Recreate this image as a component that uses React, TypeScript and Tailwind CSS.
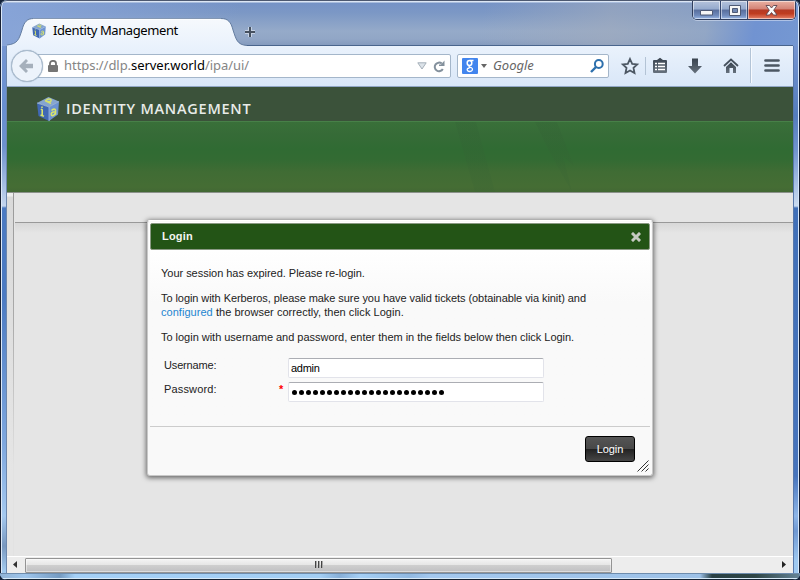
import React from "react";

const sans = "font-['Liberation_Sans',Arial,sans-serif]";
const noto = "font-['Noto_Sans','Open_Sans',sans-serif]";

function Cube({ className }: { className: string }) {
  return (
    <svg viewBox="0 0 24 26" className={className}>
      <path d="M12.500 1 23 5.500 13 11 1 7Z" fill="#86a5cf" />
      <path d="M1 7 13 11V25L2.500 20Z" fill="#4068b4" />
      <path d="M23 5.500 13 11V25L22 18.500Z" fill="#6c93d2" />
      <path d="M1 7 13 11 23 5.500M13 11V25" fill="none" stroke="#a9c2e2" strokeWidth=".7" />
      <path d="M9 4.500 15 7.500M10.500 4.200C11 2.600 15 2.400 15.200 4.200S12.500 6 11.500 5.400" fill="none" stroke="#d5e16a" strokeWidth="1.500" />
      <path d="M6.200 13.500V19.500M4.800 13.200 6.500 13.800M4.500 18.900 8 20.300M6 10.600V12" fill="none" stroke="#d7e36d" strokeWidth="1.600" />
      <path d="M15.500 14.500C17 13 19.500 12.300 19.500 14.300V18.800M19.300 15.700C16 15.800 15 17 15.300 18.700S18.500 19.500 19.300 17.200" fill="none" stroke="#d8e56c" strokeWidth="1.600" />
    </svg>
  );
}

function TitleBar() {
  return (
    <header className="relative h-[46px] shrink-0 overflow-hidden rounded-t-[7px] border-t border-[#4c5870] bg-[linear-gradient(180deg,#dce6f4_0,#dce6f4_1px,#7593c6_2px,#7c98c5_12px,#95aac9_30px,#91a6c6_38px,#8299bd_45px)]">
      <div className="absolute inset-x-0 top-[2px] bottom-0 bg-[linear-gradient(100deg,#87a4d8_0,#87a4d800_30%,#9cabc400_60%,#a1abbc99_76%,#91a5c4aa_88%,#7193d1_94%,#7598d2_100%)]" />
      <div className="absolute inset-x-0 -top-px bottom-0 rounded-t-[7px] border-x border-[#172033] shadow-[inset_1px_0_0_#dde9f8,inset_-1px_0_0_#d9e8fa]" />
      <svg viewBox="0 0 800 46" className="absolute -top-px left-0 h-[46px] w-[800px]">
        <defs>
          <linearGradient id="tab" x2="0" y2="1"><stop stopColor="#f6f9fd" /><stop offset="1" stopColor="#eaf2fc" /></linearGradient>
        </defs>
        <path d="M7 45.500H793" stroke="#49658d" />
        <path d="M7 46V45C18 44 19 39 22 30C24 22 27 18.500 34 18.500H221C228 18.500 231 22 233 30C236 39 237 45 247 45.500V46Z" fill="url(#tab)" />
        <path d="M7 45C18 44 19 39 22 30C24 22 27 18.500 34 18.500H221C228 18.500 231 22 233 30C236 39 237 45 247 45.500" fill="none" stroke="#5b7599" strokeWidth=".9" />
        <path d="M33 19.300H221" stroke="white" />
        <path d="M245 32H255M250 27V37" stroke="#e7edf599" strokeWidth="4" />
        <path d="M245 32H255M250 27V37" stroke="#46515f" strokeWidth="2" />
      </svg>
      <div className={"relative flex h-[45px] items-center pt-[15px] pl-[31px] " + noto}>
        <Cube className="h-[16px] w-[16px]" />
        <span className="ml-[6px] -translate-y-px text-[13px] leading-4 tracking-[-0.400px] whitespace-nowrap text-black">Identity Management</span>
      </div>
      <div className="absolute -top-px right-[4px] flex h-[20px] overflow-hidden rounded-b-[5px] border border-[#303e5d] border-t-[#4c5870] shadow-[0_1px_0_#d5e0f199]">
        <WindowButton kind="min" />
        <WindowButton kind="max" />
        <WindowButton kind="close" />
      </div>
    </header>
  );
}

function WindowButton({ kind }: { kind: "min" | "max" | "close" }) {
  const blue = "border-r border-r-[#36486f] bg-[linear-gradient(#b5c3dc_0,#95aacd_45%,#586e9d_50%,#6f8abb_80%,#9cb8e5_100%)]";
  const tone = kind === "close"
    ? "w-[47px] bg-[linear-gradient(#e9b1a3_0,#d38376_44%,#b53a25_50%,#bf3c20_70%,#e6826a_100%)]"
    : kind === "min" ? "w-[28px] " + blue : "w-[27px] " + blue;
  return (
    <div className={"flex h-[18px] items-center justify-center shadow-[inset_0_0_0_1px_#ffffff80] " + tone}>
      {kind === "min" && <svg className="mt-[5px] h-[6px] w-[13px]" viewBox="0 0 13 6"><path d="M.5.500H12.500V5H.5Z" fill="#f6f6f6" stroke="#4f5a75" /></svg>}
      {kind === "max" && <svg className="h-[11px] w-[13px]" viewBox="0 0 13 11"><path d="M1.500 .500H12.500V10.500H1.500Z" fill="#f6f6f6" stroke="#4f5a75" /><path d="M4.500 3.500H9.500V7.500H4.500Z" fill="#7087b2" stroke="#4f5a75" /></svg>}
      {kind === "close" && <svg className="h-[11px] w-[13px]" viewBox="0 0 13 11"><path d="M1 .500H4.500L6.500 3 8.500.500H12L8.700 5.200 12 10H8.500L6.500 7.500 4.500 10H1L4.300 5.200Z" fill="#fafafa" stroke="#5e4650" strokeWidth=".9" /></svg>}
    </div>
  );
}

function Toolbar() {
  return (
    <div className="relative flex h-[41px] shrink-0 items-center border-b border-[#91a7c5] bg-linear-to-b from-[#eaf2fc] to-[#d9e7f8]">
      <div className={"ml-[20px] flex h-[24px] w-[424px] items-center rounded-[2px] border border-[#a4b6ca] bg-white pl-[20px] " + noto}>
        <svg viewBox="0 0 10 12" className="h-[12px] w-[10px]"><path d="M2 6V3.500C2 0 8 0 8 3.500V6" fill="none" stroke="#737373" strokeWidth="1.800" /><rect y="5" width="10" height="7" rx="1" fill="#757575" /></svg>
        <span className="ml-[6px] -translate-y-px text-[13px] leading-4 tracking-[-0.050px] whitespace-nowrap text-[#858585]">https://dlp.<span className="text-black">server.world</span>/ipa/ui/</span>
        <svg viewBox="0 0 10 8" className="mr-[6px] ml-auto h-[8px] w-[10px]"><path d="M.8.800H9.200L5 7Z" fill="#dce3e9" stroke="#a5afb9" /></svg>
        <svg viewBox="0 0 12 13" className="mr-[5px] h-[13px] w-[12px]"><path d="M9.800 9A4.300 4.300 0 1 1 8.800 3.600" fill="none" stroke="#83909c" strokeWidth="2" /><path d="M11.500.500V6H6V4.500H8L11.500.500Z" fill="#83909c" /></svg>
      </div>
      <div className={"ml-[6px] flex h-[24px] w-[152px] items-center rounded-[2px] border border-[#a4b6ca] bg-white pl-[4px] " + noto}>
        <div className="flex h-4 w-4 items-center justify-center rounded-[1px] bg-[#4285ee]">
          <svg viewBox="0 0 10 14" className="h-[14px] w-[10px]" fill="none" stroke="white"><ellipse cx="4.500" cy="4" rx="2.300" ry="2.500" strokeWidth="1.500" /><path d="M5 1.500H8.500M4.500 6.500C3 8 5 8 6.500 8.800S8 12.500 4.800 12.500 1.200 9 4.500 9" strokeWidth="1.300" /></svg>
        </div>
        <svg viewBox="0 0 6 4" className="ml-[3px] h-[4px] w-[6px]"><path d="M0 0H6L3 4Z" fill="#666" /></svg>
        <span className="ml-[6px] -translate-y-px text-[13px] leading-4 text-[#666] italic">Google</span>
        <svg viewBox="0 0 14 14" className="mr-[4px] ml-auto h-[14px] w-[14px]" fill="none" stroke="#2d70ad"><circle cx="8.800" cy="5" r="3.900" strokeWidth="2" /><path d="M6 8 1 13" strokeWidth="2.400" /></svg>
      </div>
      <svg viewBox="0 0 184 40" className="h-[40px] w-[184px]">
        <defs><linearGradient id="ink" x2="0" y2="1"><stop stopColor="#39434f" /><stop offset="1" stopColor="#66717d" /></linearGradient></defs>
        <path d="M21 13 23.200 17.800 28.200 18.400 24.500 21.800 25.500 27 21 24.500 16.500 27 17.500 21.800 13.800 18.400 18.800 17.800Z" fill="none" stroke="#4c5763" strokeWidth="1.800" />
        <path d="M36.500 11V29" stroke="#b3c3d5" />
        <path d="M45 14H48L51 11.800 54 14H57Q58 14 58 15V26Q58 27 57 27H45Q44 27 44 26V15Q44 14 45 14Z" fill="url(#ink)" />
        <path d="M46 17.500H48M49 17.500H56M46 20.500H48M49 20.500H56M46 23.500H48M49 23.500H56" stroke="white" strokeWidth="1.300" />
        <path d="M83 12.500H89V20H93L86 27.500 79 20H83Z" fill="url(#ink)" />
        <path d="M115 20 122 13.500 129 20" fill="none" stroke="#46515d" strokeWidth="1.800" />
        <path d="M117 21 122 16.300 127 21V27H124V22H120.500V27H117Z" fill="url(#ink)" />
        <path d="M141.500 2V37" stroke="#b3c4d7" /><path d="M142.500 2V37" stroke="#f7faff" />
        <path d="M156.500 14.500H169.500M156.500 19.500H169.500M156.500 24.500H169.500" stroke="#4c5763" strokeWidth="2.700" strokeLinecap="round" />
      </svg>
      <div className="absolute top-[4px] left-[4px] flex h-[32px] w-[32px] items-center justify-center rounded-full border border-[#a8bacd] bg-[#edf3fb] shadow-[0_0_1px_#8297ae]">
        <svg viewBox="0 0 16 14" className="h-[14px] w-[16px]"><path d="M7 0 0 7 7 14 9 12 6.500 9.200H14V4.800H6.500L9 2Z" fill="#a6b0bc" /></svg>
      </div>
    </div>
  );
}

function Banner() {
  return (
    <div className="shrink-0">
      <div className="flex h-[35px] items-center border-b border-[#478048] bg-[#3b523a] pt-[9px] pl-[29px]">
        <Cube className="h-[26px] w-[24px]" />
        <h1 className="ml-[6px] text-[14.500px] leading-[16px] font-semibold tracking-[0.750px] whitespace-nowrap text-[#e8ebe8] font-['Open_Sans','Noto_Sans',sans-serif]">IDENTITY MANAGEMENT</h1>
      </div>
      <div className="h-[70px] bg-[linear-gradient(180deg,#397039_0,#366b37_12px,#306b33_27px,#336b33_38px,#406c34_50px,#456d34_65px,#426834_70px)]">
        <svg viewBox="0 0 786 70" className="h-[70px] w-[786px]">
          <defs><linearGradient id="streak" x2="0" y2="1"><stop stopColor="#315d34" stopOpacity=".3" /><stop offset="1" stopColor="#3a6534" stopOpacity=".35" /></linearGradient></defs>
          <path d="M448 0H469L488 70H468Z" fill="url(#streak)" opacity=".7" />
          <path d="M528 0H550L567 44 556 34 565 70 542 29Z" fill="url(#streak)" opacity=".7" />
        </svg>
      </div>
    </div>
  );
}

function LoginDialog() {
  return (
    <section role="dialog" aria-label="Login" className={"absolute top-[220px] left-[147px] flex h-[256px] w-[506px] flex-col rounded-[3px] border border-[#c8c8c8] border-t-white bg-[#f9f9f9] p-[2px] text-[11px] text-[#222] shadow-[0_1px_5px_1px_#0000008c] " + sans}>
      <div className="flex h-[27px] w-[500px] shrink-0 items-center rounded-[2px] border border-[#8a9984] bg-[#235416] pr-[8px] pl-[11px] shadow-[0_0_0_1px_white]">
        <h2 className="text-[11px] font-bold tracking-[0.200px] text-[#f3f5f1]">Login</h2>
        <svg viewBox="0 0 10 10" className="ml-auto h-[10px] w-[10px]"><path d="M2 2 8 8M8 2 2 8" stroke="#c5cac2" strokeWidth="3" strokeLinecap="square" /></svg>
      </div>
      <div className="flex h-[177px] shrink-0 flex-col border-b border-[#ccc] bg-linear-to-b from-white to-[#f9f9f9] to-30% px-[11px] pt-[16px] leading-[14px]">
        <p className="tracking-[-0.030px]">Your session has expired. Please re-login.</p>
        <p className="mt-[11px] whitespace-nowrap"><span className="tracking-[-0.068px]">To login with Kerberos, please make sure you have valid tickets (obtainable via kinit) and</span><br /><span className="tracking-[0.040px]"><a className="text-[#1d85d0]">configured</a> the browser correctly, then click Login.</span></p>
        <p className="mt-[11px] tracking-[-0.024px] whitespace-nowrap">To login with username and password, enter them in the fields below then click Login.</p>
        <div className="mt-[14px] flex h-[20px] pl-[3px]">
          <label className="w-[124px] tracking-[-0.150px]">Username:</label>
          <div className="flex h-[20px] w-[256px] items-center rounded-[2px] border border-[#e2e3ea] border-t-[#abadb3] bg-white px-[2px] tracking-[-0.300px] text-black">admin</div>
        </div>
        <div className="mt-[4px] flex h-[20px] pl-[3px]">
          <label className="w-[115px] tracking-[0.150px]">Password:</label>
          <span className="w-[9px] font-bold text-[#ff0000]">*</span>
          <div className="flex h-[20px] w-[256px] items-center gap-[2px] rounded-[2px] border border-[#e2e3ea] border-t-[#abadb3] bg-white px-[3px] pt-px">
            {Array.from({ length: 22 }, (_, i) => <span key={i} className="h-[5px] w-[5px] rounded-full bg-black" />)}
          </div>
        </div>
      </div>
      <div className="flex justify-end pt-[9px] pr-[15px]">
        <button className="h-[26px] w-[50px] rounded-[3px] border border-black bg-[linear-gradient(#555_0,#484848_49%,#202020_50%,#292929_60%,#464646_100%)] text-[11px] tracking-[-0.100px] text-white">Login</button>
      </div>
      <svg viewBox="0 0 12 12" className="absolute right-[3px] bottom-[3px] h-[12px] w-[12px]"><path d="M.5 11.500 11.500.500M4.500 11.500 11.500 4.500M8.500 11.500 11.500 8.500" stroke="#333" strokeWidth="1" /></svg>
    </section>
  );
}

function ScrollBar() {
  return (
    <div className="flex h-[17px] shrink-0 items-center border-t border-white bg-[#ededed]">
      <svg viewBox="0 0 18 16" className="h-[16px] w-[18px]"><path d="M10 4V11L6 7.500Z" fill="#333" /></svg>
      <div className="flex h-[15px] w-[587px] items-center justify-center rounded-[1px] border border-[#949494] bg-[linear-gradient(#f4f4f4_0,#e6e6e6_45%,#cecece_50%,#bfbfc2_100%)] shadow-[inset_0_0_0_1px_#ffffff70]">
        <div className="flex -translate-y-px gap-px">
          {[0, 1, 2].map((i) => <span key={i} className="h-[7px] w-[2px] border-r border-[#aaa] bg-[#444]" />)}
        </div>
      </div>
      <svg viewBox="0 0 18 16" className="mr-[1px] ml-auto h-[16px] w-[18px]"><path d="M8 4V11L12 7.500Z" fill="#222" /></svg>
    </div>
  );
}

export default function App() {
  return (
    <div className="h-[580px] w-[800px] overflow-hidden bg-[#142238]">
      <div className="relative flex h-[580px] w-[800px] flex-col overflow-hidden rounded-[7px] bg-[#a5cdf3]">
        <TitleBar />
        <div className="flex h-[527px] shrink-0">
          <div className="w-[7px] shrink-0 border-l border-[#172033] bg-[linear-gradient(#7495d1_0,#688fd1_60px,#6d91cd_100px,#c4d6ef_160px,#4b7ac2_162px,#4b7ac2_250px,#7fa8df_400px,#a5c9ef_470px,#7998bf_500px,#a4cbef_525px)] shadow-[inset_1px_0_0_#dde9f8,inset_-1px_0_0_#6d87ad]" />
          <main className="flex w-[786px] shrink-0 flex-col bg-[#e5e5e5]">
            <Toolbar />
            <Banner />
            <div className="flex min-h-0 flex-1 border-t border-[#8b918a]">
              <div className="w-[7px] shrink-0 border-r border-[#aaa] bg-[linear-gradient(#eee_0,#eee_3px,#dadada_4px,#e5e5e5_280px)] [border-image:linear-gradient(#999,#aaa_35%,#e2e2e2_75%)_1]" />
              <div className="flex flex-1 flex-col pl-px">
                <div className="h-[30px] border-b border-[#999]" />
                <div className="h-[10px] bg-linear-to-b from-[#d8d8d8] to-[#e5e5e5]" />
              </div>
            </div>
            <ScrollBar />
          </main>
          <div className="w-[7px] shrink-0 border-r border-[#101b30] bg-[linear-gradient(#7595d1_0,#547cbd_70px,#7195cf_105px,#cadbf0_160px,#4170b8_162px,#4774bc_430px,#8db5e7_470px,#6f98d2_485px,#9fc9f1_515px)] shadow-[inset_1px_0_0_#5878aa,inset_-1px_0_0_#d9e8fa]" />
        </div>
        <div className="h-[7px] shrink-0 border-b border-[#152333] bg-[linear-gradient(90deg,#91b3d5_0,#9ec5ec_25px,#759bc2_60px,#a4d0f7_75px,#a3cef4_320px,#87afd8_340px,#a5cff5_360px,#91b9e2_410px,#a3c8ef_430px,#9dc1e7_700px,#294044_712px,#2e4545_755px,#668497_800px)] shadow-[inset_0_1px_0_#6e8cad,inset_0_-1px_0_#d7e9f8]" />
        <LoginDialog />
      </div>
    </div>
  );
}
